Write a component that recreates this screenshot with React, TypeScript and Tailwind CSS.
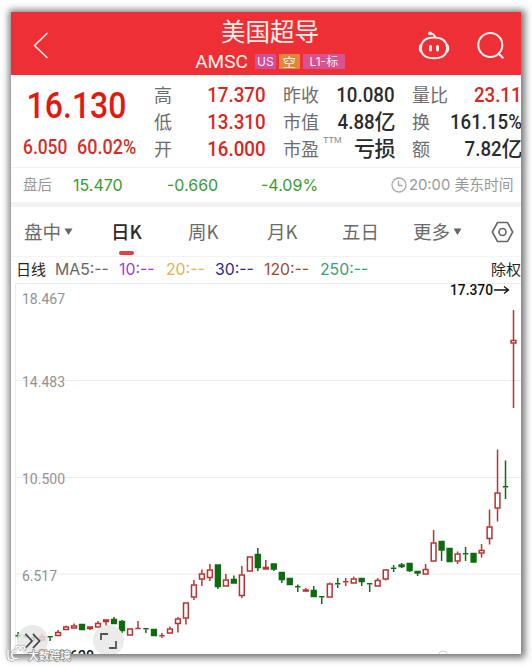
type Candle = {
  up: boolean;
  high: number;
  top: number;
  bottom: number;
  low: number;
};

const c = (kind: 'r' | 'g', high: number, top: number, bottom: number, low: number): Candle => ({
  up: kind === 'r',
  high,
  top,
  bottom,
  low,
});

// Newest candle first, y values in chart pixels
const candles: Candle[] = [
  c('r', 27, 57, 60.5, 125),
  c('g', 177.5, 203, 204.5, 216),
  c('r', 166.5, 209.5, 225.5, 238.5),
  c('r', 226.5, 243.5, 256, 261.5),
  c('r', 261, 267, 270.5, 274.5),
  c('g', 270, 270, 279.5, 279.5),
  c('g', 264, 270, 271.5, 278),
  c('r', 268.5, 270.5, 278.5, 281),
  c('g', 265, 265, 279, 279),
  c('g', 258, 258, 267.5, 278),
  c('r', 247, 259.5, 278.5, 278.5),
  c('r', 281, 286, 291.5, 291.5),
  c('g', 288, 288, 290.5, 293),
  c('g', 280, 280, 288, 289),
  c('g', 280, 281.5, 284, 285),
  c('g', 282, 284.5, 286, 289),
  c('r', 286.5, 286.5, 296.5, 297.5),
  c('r', 295, 297, 303.5, 303.5),
  c('g', 300, 300, 301.5, 309),
  c('g', 295, 295, 299, 303),
  c('r', 293.5, 295.5, 300.5, 300.5),
  c('r', 295, 298, 299.5, 303),
  c('g', 295, 300, 301.5, 305),
  c('r', 299.5, 300.5, 314.5, 314.5),
  c('g', 313, 313, 314.5, 321),
  c('g', 303, 307, 314, 314),
  c('r', 305, 306.5, 308.5, 309),
  c('g', 301.5, 303, 304.5, 309),
  c('g', 295, 295, 302, 302),
  c('g', 289, 289, 297, 300),
  c('g', 280.5, 280.5, 286.5, 288),
  c('r', 277, 284, 286.5, 286.5),
  c('g', 265, 271, 285, 288),
  c('r', 273.5, 273.5, 288.5, 288.5),
  c('r', 283, 291.5, 313, 315),
  c('g', 292.5, 296, 300.5, 300.5),
  c('r', 291, 296.5, 303.5, 303.5),
  c('g', 281.5, 281.5, 304, 306),
  c('r', 281, 286.5, 295, 298),
  c('r', 286.5, 290.5, 296.5, 303),
  c('r', 297, 301.5, 314.5, 317),
  c('r', 319.5, 319.5, 335.5, 341.5),
  c('r', 334, 335.5, 341, 349.5),
  c('r', 343.5, 345.5, 350.5, 350.5),
  c('r', 350, 352, 353.5, 355),
  c('g', 346, 346, 353, 353),
  c('g', 345, 345, 346.5, 350),
  c('r', 338, 345, 346, 346),
  c('r', 345.5, 345.5, 352.5, 352.5),
  c('g', 337, 338, 348, 350),
  c('g', 334, 336, 341, 341),
  c('r', 336.5, 336.5, 339, 343),
  c('r', 338, 340, 344.5, 344.5),
  c('r', 343.5, 343.5, 346, 347),
  c('g', 341, 341, 347, 347),
  c('r', 340.5, 342.5, 345.5, 345.5),
  c('r', 342.5, 343.5, 347, 347),
  c('r', 347, 349, 353, 353),
  c('g', 353, 353, 354.5, 358),
  c('r', 351, 353.5, 357.5, 357.5),
  c('g', 350, 354, 355.5, 358),
  c('g', 350, 352, 353.5, 355),
  c('g', 349, 352, 353.5, 355),
];

const stats = [
  {
    box: 'w-[112px]',
    rows: [
      { label: '高', value: '17.370' },
      { label: '低', value: '13.310' },
      { label: '开', value: '16.000' },
    ],
    color: 'text-[#d8261f]',
  },
  {
    box: 'w-[112px]',
    rows: [
      { label: '昨收', value: '10.080' },
      { label: '市值', value: '4.88', unit: '亿' },
      { label: '市盈', sup: 'TTM', value: '', unit: '亏损' },
    ],
    color: 'text-[#2b2b2b]',
  },
  {
    box: 'w-[110px]',
    rows: [
      { label: '量比', value: '23.11', red: true },
      { label: '换', value: '161.15%' },
      { label: '额', value: '7.82', unit: '亿' },
    ],
    color: 'text-[#2b2b2b]',
  },
];

const averages = [
  { text: 'MA5:--', cls: 'w-[64px] text-[#666]' },
  { text: '10:--', cls: 'w-[47px] text-[#a23bd0]' },
  { text: '20:--', cls: 'w-[49px] text-[#e8b04a]' },
  { text: '30:--', cls: 'w-[49px] text-[#2a2a8c]' },
  { text: '120:--', cls: 'w-[56px] text-[#a04a2c]' },
  { text: '250:--', cls: 'w-[60px] text-[#3aa077]' },
];

const axis = [
  { y: 20.5, text: '18.467', w: 43 },
  { y: 104, text: '14.483', w: 43 },
  { y: 201, text: '10.500', w: 43 },
  { y: 298, text: '6.517', w: 35 },
];

function Header() {
  return (
    <header className="flex h-[63px] shrink-0 bg-[#ee3036] text-[#fff0ee]">
      <div className="w-[169px] pl-[22px] pt-[20px]">
        <svg width="16" height="28" viewBox="0 0 16 28" fill="none" stroke="currentColor" strokeWidth="1.6">
          <path d="M14.5 1 L1.5 13.5 L14.5 26" />
        </svg>
      </div>
      <div className="flex w-[180px] flex-col items-center">
        <h1 className="mt-[4px] h-[30px] text-[24.5px] leading-[30px]">美国超导</h1>
        <div className="mt-[6px] flex h-[18px] items-center pt-px text-[13px] leading-[15px]">
          <span className="mr-[7px] font-['Roboto'] text-[19px]">AMSC</span>
          <span className="mr-[3px] flex h-[15px] w-[21px] items-center justify-center bg-[#cf4f9c] font-['Inter'] text-[12px]">US</span>
          <span className="mr-[3px] flex h-[15px] w-[21px] items-center justify-center bg-[#e0873c]">空</span>
          <span className="flex h-[15px] w-[42px] items-center justify-center bg-[#d8528f] font-['Inter','Noto_Sans_CJK_SC'] text-[12px]">L1-标</span>
        </div>
      </div>
      <div className="flex pl-[57px] pt-[19px]">
        <svg width="34" height="30" viewBox="0 0 34 30" fill="none" stroke="currentColor" strokeWidth="2">
          <path d="M17 6.500 C24 6.500 29.500 9.500 30 16.500 C30.300 24 25 27.300 17 27.300 C9 27.300 3.700 24 4 16.500 C4.500 9.500 10 6.500 17 6.500 Z" />
          <path d="M4 13.500 C2 15 2 19.500 4 21" strokeWidth="1.6" />
          <path d="M30 13.500 C32 15 32 19.500 30 21" strokeWidth="1.6" />
          <path d="M18 6.500 C17.800 3.800 16.500 2.800 13.500 2.400" strokeWidth="1.8" />
          <circle cx="13" cy="2.400" r="1.900" fill="currentColor" stroke="none" />
          <path d="M13.500 15.500 V19 M20.500 15.500 V19" strokeWidth="3" strokeLinecap="round" />
        </svg>
        <svg className="ml-[24px]" width="30" height="30" viewBox="0 0 30 30" fill="none" stroke="currentColor" strokeWidth="2">
          <circle cx="15.300" cy="14" r="12" />
          <path d="M23 22 L28.300 27.300" />
        </svg>
      </div>
    </header>
  );
}

function Quote() {
  return (
    <section className="flex h-[93px] shrink-0 border-b border-[#f1f1f1] bg-white">
      <div className="w-[143px] shrink-0 pl-3 pt-[10px] font-['Roboto'] font-medium">
        <div className="h-[42px] origin-left scale-x-[.89] pl-[4px] text-[36px] leading-[42px] text-[#e1190f]">16.130</div>
        <div className="mt-[8px] flex text-[20px] leading-[24px] text-[#d32f2a]">
          <span className="w-[54px] origin-left scale-x-[.87]">6.050</span>
          <span className="origin-left scale-x-[.9]">60.02%</span>
        </div>
      </div>
      <div className="flex shrink-0 gap-[17px] pt-[7px]">
        {stats.map((col, i) => (
          <div key={i} className={`${col.box} shrink-0 ${col.color}`}>
            {col.rows.map((row) => (
              <div key={row.label} className="flex h-[27px] items-center justify-between whitespace-nowrap">
                <span className="flex shrink-0 pb-[2px] text-[18px] leading-[27px] text-[#6d6d6d]">
                  {row.label}
                  {'sup' in row && (
                    <sup className="ml-[4px] mt-[5px] font-['Liberation_Sans'] text-[9px] leading-[9px] text-[#888]">TTM</sup>
                  )}
                </span>
                <span className={`flex shrink-0 items-center text-[21px] font-medium leading-[27px] ${'red' in row ? 'text-[#d8261f]' : ''}`}>
                  {row.value && <span className="origin-right scale-x-[.89] font-['Roboto']">{row.value}</span>}
                  {'unit' in row && <span className="pb-[4px] tracking-[-0.5px]">{row.unit}</span>}
                </span>
              </div>
            ))}
          </div>
        ))}
      </div>
    </section>
  );
}

function AfterHours() {
  return (
    <section className="flex h-[39px] shrink-0 items-center border-b-[5px] border-[#f2f2f2] bg-white font-['Inter','Noto_Sans_CJK_SC'] text-[16px] text-[#3a9a32]">
      <span className="w-[50px] pl-3 text-[14.5px] text-[#999]">盘后</span>
      <span className="w-[94px] pl-[12px]">15.470</span>
      <span className="w-[95px] pl-[12px]">-0.660</span>
      <span className="w-[141px] pl-[11px]">-4.09%</span>
      <svg className="shrink-0" width="16" height="16" viewBox="0 0 16 16" fill="none" stroke="#aaa" strokeWidth="1.300">
        <circle cx="8" cy="8" r="7" />
        <path d="M7.500 3.500 V8.500 H11.500" />
      </svg>
      <span className="ml-[2px] whitespace-nowrap text-[14.8px] text-[#999]">20:00 美东时间</span>
    </section>
  );
}

function Caret() {
  return (
    <svg width="9" height="8" viewBox="0 0 9 8" fill="#666">
      <path d="M0.500 0.500 H8.500 L4.500 7 Z" />
    </svg>
  );
}

function Tabs() {
  return (
    <nav className="flex h-[50px] shrink-0 items-center border-b border-[#f3f3f3] bg-white text-[18.500px] text-[#6b6b6b]">
      <div className="flex w-[100px] items-center gap-[3px] pl-[13px]">
        盘中
        <Caret />
      </div>
      <div className="relative w-[77px] font-medium text-[#2b2b2b]">
        日K
        <span className="absolute left-[8px] top-[33px] h-[4px] w-[15px] rounded-full bg-[#df4040]" />
      </div>
      <div className="w-[79px]">周K</div>
      <div className="w-[75px]">月K</div>
      <div className="w-[71px]">五日</div>
      <div className="flex w-[78px] items-center gap-[3px]">
        更多
        <Caret />
      </div>
      <svg width="23" height="22" viewBox="0 0 23 22" fill="none" stroke="#666" strokeWidth="1.600">
        <path d="M6.500 1.500 H16.500 L21.700 11 L16.500 20.500 H6.500 L1.300 11 Z" />
        <circle cx="11.500" cy="11" r="3.500" />
      </svg>
    </nav>
  );
}

function Averages() {
  return (
    <div className="flex h-[26px] shrink-0 items-center whitespace-nowrap bg-white pl-[5px] font-['Inter','Noto_Sans_CJK_SC'] text-[15.800px]">
      <span className="w-[40px] text-[15px] text-[#222]">日线</span>
      {averages.map((a) => (
        <span key={a.text} className={`shrink-0 ${a.cls}`}>
          {a.text}
        </span>
      ))}
      <span className="ml-[111px] text-[15px] text-[#222]">除权</span>
    </div>
  );
}

function Chart() {
  return (
    <section className="h-[371px] shrink-0 bg-white">
      <svg width="510" height="371" viewBox="0 0 510 371">
        <path d="M4.500 371 V0.500 H510 M4 97.500 H510 M4 194.500 H510 M4 291 H510" stroke="#ececec" fill="none" />
        {axis.map((a) => (
          <text key={a.text} x="11" y={a.y} textLength={a.w} lengthAdjust="spacingAndGlyphs" fill="#929292" className="font-['Roboto'] text-[15px]">
            {a.text}
          </text>
        ))}
        {candles.map((k, i) => {
          const x = 502.5 - i * 7.99;
          const color = k.up ? '#bb3030' : '#0d6b12';
          const h = k.bottom - k.top;
          return (
            <g key={i} stroke={color} strokeWidth="1.500">
              {k.high < k.top && <path d={`M${x} ${k.high} V${k.top}`} />}
              {k.low > k.bottom && <path d={`M${x} ${k.bottom} V${k.low}`} />}
              {h < 2 ? (
                <path d={`M${x - 2.7} ${k.top + h / 2} H${x + 2.7}`} />
              ) : (
                <rect x={x - 2.4} y={k.top + 0.5} width="4.800" height={h - 1} fill={k.up ? '#fff' : color} />
              )}
            </g>
          );
        })}
        <text x="439" y="12" textLength="43" lengthAdjust="spacingAndGlyphs" fill="#111" className="font-['Roboto'] text-[15.500px] font-medium">
          17.370
        </text>
        <path d="M483 7 H497 M493 3.500 L497.500 7 L493 10.500" stroke="#111" strokeWidth="1.300" fill="none" />
        <text x="47" y="378" textLength="36" lengthAdjust="spacingAndGlyphs" fill="#111" className="font-['Roboto'] text-[15px] font-medium">
          2.620
        </text>
        <circle cx="21.500" cy="357.500" r="15.500" fill="#e4e4e4" fillOpacity="0.800" />
        <path d="M14.500 351 L21 358 L14.500 365 M22 351 L28.500 358 L22 365" stroke="#444" strokeWidth="1.800" fill="none" />
        <circle cx="97.500" cy="357.500" r="15.500" fill="#e9e9e9" fillOpacity="0.900" />
        <path d="M90 357 V351 H97 M98 365 H105 V358" stroke="#555" strokeWidth="1.800" fill="none" />
        <path d="M428 371 A4 3 0 0 1 436 371" stroke="#ccc" fill="none" />
      </svg>
    </section>
  );
}

function Watermark() {
  return (
    <svg className="absolute left-[5px] top-[644px]" width="72" height="20" viewBox="0 0 72 20">
      <g stroke="#a5a5a5" strokeWidth="2.800" fill="none" strokeLinejoin="round">
        <path d="M3 6 V13 Q3 16 6 16 H9 M12 7 A4 4 0 1 0 13 14" />
        <path d="M11 5 A2 2 0 1 1 14 6 M16 5 A2 2 0 1 1 19 6" />
      </g>
      <g stroke="#fff" strokeWidth="1.400" fill="none">
        <path d="M3 6 V13 Q3 16 6 16 H9 M12 7 A4 4 0 1 0 13 14" />
        <path d="M11 5 A2 2 0 1 1 14 6 M16 5 A2 2 0 1 1 19 6" />
      </g>
      <text
        x="23"
        y="15.500"
        textLength="43"
        fill="#fff"
        stroke="#8c8c8c"
        strokeWidth="1.400"
        paintOrder="stroke"
        className="font-['Noto_Sans_CJK_SC'] text-[11px] font-medium"
      >
        大数跨境
      </text>
    </svg>
  );
}

export default function App() {
  return (
    <div className="relative h-[667px] w-[532px] overflow-hidden bg-white pl-[11px] pt-[12px] font-['Noto_Sans_CJK_SC',sans-serif]">
      <div className="h-[642px] w-[510px] shadow-[1px_1px_7px_3px_#777]">
        <main className="flex h-full w-full flex-col overflow-hidden bg-white">
          <Header />
          <Quote />
          <AfterHours />
          <Tabs />
          <Averages />
          <Chart />
        </main>
      </div>
      <Watermark />
    </div>
  );
}
